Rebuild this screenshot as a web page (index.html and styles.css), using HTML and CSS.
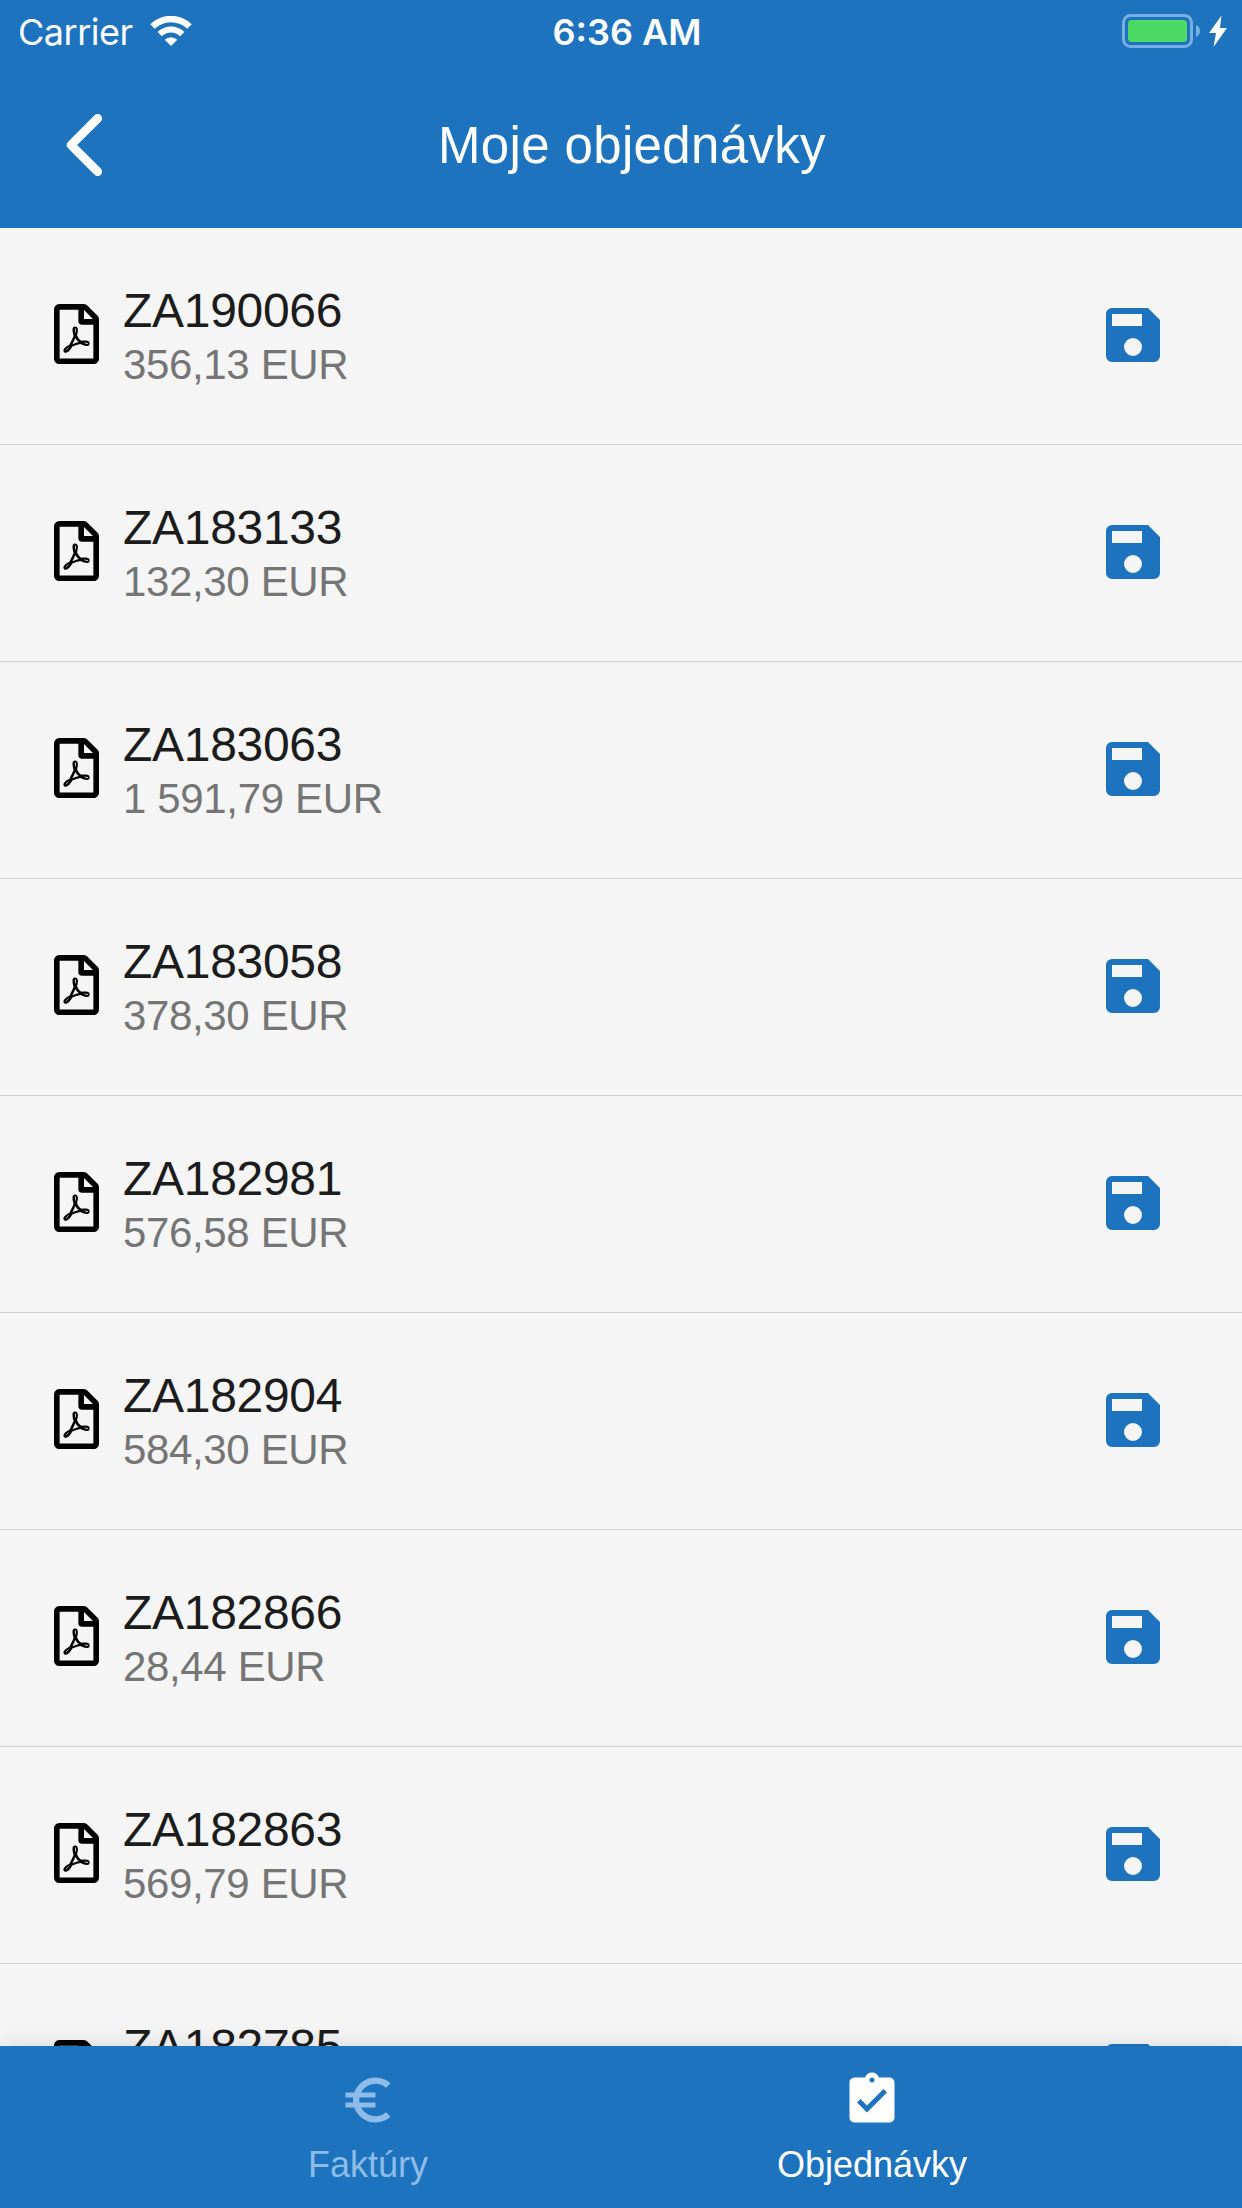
FILE: index.html
```html
<!DOCTYPE html>
<html lang="sk">
<head>
    <meta charset="UTF-8">
    <meta name="viewport" content="width=device-width, initial-scale=1.0">
    <title>Moje objednávky</title>
    <link rel="stylesheet" href="styles.css">
</head>
<body>
    <!-- Shared icons -->
    <svg class="sprite" width="0" height="0">
        <symbol id="pdf" viewBox="0 0 384 512">
            <path d="M369.9 97.9L286 14C277 5 264.8-.1 252.1-.1H48C21.5 0 0 21.5 0 48v416c0 26.5 21.5 48 48 48h288c26.5 0 48-21.5 48-48V131.900c0-12.700-5.100-25-14.100-34zM332.100 128H256V51.900l76.100 76.100zM48 464V48h160v104c0 13.300 10.700 24 24 24h104v288H48zm250.200-143.700c-12.200-12-47-8.700-64.400-6.500-17.200-10.500-28.700-25-36.800-46.300 3.900-16.100 10.100-40.600 5.400-56-4.200-26.200-37.800-23.600-42.600-5.900-4.400 16.100-.4 38.500 7 67.100-10 23.900-24.900 56-35.400 74.400-20 10.300-47 26.200-51 46.200-3.300 15.800 26 55.200 76.100-31.200 22.400-7.400 46.800-16.500 68.400-20.100 18.900 10.200 41 17 55.800 17 25.500 0 28-28.200 17.500-38.700zm-198.100 77.800c5.100-13.700 24.500-29.500 30.400-35-19 30.300-30.400 35.700-30.400 35zm81.600-190.600c7.400 0 6.700 32.100 1.800 40.800-4.400-13.900-4.300-40.800-1.800-40.800zm-24.400 136.600c9.700-16.900 18-37 24.700-54.700 8.300 15.100 18.900 27.200 30.100 35.500-20.800 4.300-38.900 13.100-54.800 19.200zm131.600-5s-5 6-37.300-7.800c35.100-2.600 40.900 5.400 37.300 7.800z"/>
        </symbol>
        <symbol id="save" viewBox="0 0 24 24">
            <path d="M17 3H5a2 2 0 0 0-2 2v14a2 2 0 0 0 2 2h14a2 2 0 0 0 2-2V7l-4-4zm-5 16a3 3 0 1 1 0-6 3 3 0 0 1 0 6zm3-10H5V5h10v4z"/>
        </symbol>
    </svg>

    <header class="header">
        <div class="status-bar">
            <div class="status-left">
                <span class="carrier">Carrier</span>
                <svg class="wifi" width="42" height="31" viewBox="0 0 42 31">
                    <path d="M2.500 10.500a26.500 26.500 0 0 1 37 0" fill="none" stroke="#fff" stroke-width="6.400"/>
                    <path d="M9.700 18.200a16 16 0 0 1 22.600 0" fill="none" stroke="#fff" stroke-width="6"/>
                    <path d="M14.700 23.700a9 9 0 0 1 12.600 0L21 30z" fill="#fff"/>
                </svg>
            </div>
            <span class="time">6:36 AM</span>
            <div class="status-right">
                <svg width="106" height="34" viewBox="0 0 106 34">
                    <rect x="1.5" y="1.5" width="68" height="31" rx="7" fill="none" stroke="#78afe2" stroke-width="3"/>
                    <rect x="6" y="6" width="59" height="22" rx="3.5" fill="#4cd964"/>
                    <path d="M74 11c2.600 1 4 3.200 4 6s-1.400 5-4 6z" fill="#78afe2"/>
                    <path d="M99.500 1.500L87 19h7l-2.500 14L105 14h-7z" fill="#fff"/>
                </svg>
            </div>
        </div>
        <div class="nav-bar">
            <a class="back" href="#">
                <svg width="40" height="66" viewBox="0 0 40 66">
                    <path d="M33.700 6.300L7 33l26.700 26.700" fill="none" stroke="#fff" stroke-width="8.800" stroke-linecap="round" stroke-linejoin="round"/>
                </svg>
            </a>
            <h1>Moje objednávky</h1>
        </div>
    </header>

    <ul class="orders">
        <li class="order">
            <svg class="pdf"><use href="#pdf"/></svg>
            <div class="info"><div class="number">ZA190066</div><div class="price">356,13 EUR</div></div>
            <svg class="save"><use href="#save"/></svg>
        </li>
        <li class="order">
            <svg class="pdf"><use href="#pdf"/></svg>
            <div class="info"><div class="number">ZA183133</div><div class="price">132,30 EUR</div></div>
            <svg class="save"><use href="#save"/></svg>
        </li>
        <li class="order">
            <svg class="pdf"><use href="#pdf"/></svg>
            <div class="info"><div class="number">ZA183063</div><div class="price">1 591,79 EUR</div></div>
            <svg class="save"><use href="#save"/></svg>
        </li>
        <li class="order">
            <svg class="pdf"><use href="#pdf"/></svg>
            <div class="info"><div class="number">ZA183058</div><div class="price">378,30 EUR</div></div>
            <svg class="save"><use href="#save"/></svg>
        </li>
        <li class="order">
            <svg class="pdf"><use href="#pdf"/></svg>
            <div class="info"><div class="number">ZA182981</div><div class="price">576,58 EUR</div></div>
            <svg class="save"><use href="#save"/></svg>
        </li>
        <li class="order">
            <svg class="pdf"><use href="#pdf"/></svg>
            <div class="info"><div class="number">ZA182904</div><div class="price">584,30 EUR</div></div>
            <svg class="save"><use href="#save"/></svg>
        </li>
        <li class="order">
            <svg class="pdf"><use href="#pdf"/></svg>
            <div class="info"><div class="number">ZA182866</div><div class="price">28,44 EUR</div></div>
            <svg class="save"><use href="#save"/></svg>
        </li>
        <li class="order">
            <svg class="pdf"><use href="#pdf"/></svg>
            <div class="info"><div class="number">ZA182863</div><div class="price">569,79 EUR</div></div>
            <svg class="save"><use href="#save"/></svg>
        </li>
        <li class="order">
            <svg class="pdf"><use href="#pdf"/></svg>
            <div class="info"><div class="number">ZA182785</div></div>
            <svg class="save"><use href="#save"/></svg>
        </li>
    </ul>

    <nav class="tabs">
        <a class="tab" href="#">
            <svg viewBox="0 0 24 24">
                <path d="M15 18.500c-2.510 0-4.680-1.420-5.760-3.500H15v-2H8.580c-.05-.33-.08-.66-.08-1s.03-.67.08-1H15V9H9.240C10.320 6.920 12.500 5.500 15 5.500c1.610 0 3.090.59 4.230 1.570L21 5.300C19.410 3.870 17.300 3 15 3c-3.920 0-7.240 2.510-8.480 6H3v2h3.060c-.04.33-.06.66-.06 1s.02.67.06 1H3v2h3.520c1.240 3.490 4.560 6 8.480 6 2.310 0 4.410-.87 6-2.300l-1.780-1.770c-1.130.98-2.600 1.570-4.220 1.570z"/>
            </svg>
            <span>Faktúry</span>
        </a>
        <a class="tab active" href="#">
            <svg viewBox="0 0 24 24">
                <path d="M19 3h-4.180C14.400 1.840 13.300 1 12 1c-1.300 0-2.400.84-2.820 2H5c-1.100 0-2 .9-2 2v14c0 1.100.9 2 2 2h14c1.100 0 2-.9 2-2V5c0-1.100-.9-2-2-2zm-7 0c.55 0 1 .45 1 1s-.45 1-1 1-1-.45-1-1 .45-1 1-1zm-2 14l-4-4 1.410-1.410L10 14.170l6.590-6.590L18 9l-8 8z"/>
            </svg>
            <span>Objednávky</span>
        </a>
    </nav>
</body>
</html>
```

FILE: styles.css
```css
* {
    box-sizing: border-box;
}

body {
    margin: 0;
    height: 2208px;
    display: flex;
    flex-direction: column;
    overflow: hidden;
    background-color: #f5f5f5;
    font-family: "Liberation Sans", Arial, sans-serif;
}

svg {
    display: block;
    flex-shrink: 0;
}

.sprite {
    position: absolute;
}

/* Header */
.header {
    height: 228px;
    flex-shrink: 0;
    background-color: #1e73be;
    color: #fff;
}

.status-bar {
    height: 60px;
    display: grid;
    grid-template-columns: 1fr auto 1fr;
    align-items: center;
    padding: 0 14px 0 18px;
    font-family: Inter, sans-serif;
    font-size: 36px;
}

.status-left {
    display: flex;
    align-items: center;
    gap: 17px;
}

.carrier {
    line-height: 60px;
    padding-top: 2px;
    letter-spacing: -0.5px;
}

.time {
    font-weight: 600;
    line-height: 60px;
    padding-top: 2px;
    padding-left: 8px;
}

.status-right {
    display: flex;
    justify-content: flex-end;
}

.nav-bar {
    height: 168px;
    display: grid;
    grid-template-columns: 104px 1fr 82px;
    align-items: center;
    padding-top: 1px;
}

.back {
    padding-left: 64px;
}

h1 {
    margin: 0;
    padding-top: 2px;
    font-size: 51px;
    font-weight: normal;
    text-align: center;
    line-height: 60px;
    letter-spacing: 0.35px;
}

/* Orders list */
.orders {
    flex: 1;
    min-height: 0;
    overflow: hidden;
    margin: 0;
    padding: 0;
    list-style: none;
}

.order {
    height: 217px;
    display: flex;
    align-items: flex-start;
    padding: 0 73px 0 54px;
    border-bottom: 1px solid #d2d2d2;
}

.pdf {
    width: 45px;
    height: 60px;
    margin-top: 76px;
    fill: #000;
}

.info {
    flex: 1;
    margin-left: 24px;
    padding-top: 56px;
}

.number {
    font-size: 48px;
    line-height: 54px;
    letter-spacing: -0.3px;
    color: #1c1c1c;
}

.price {
    font-size: 42px;
    line-height: 54px;
    letter-spacing: -0.35px;
    color: #757575;
}

.save {
    width: 72px;
    height: 72px;
    margin-top: 71px;
    fill: #1e73be;
}

/* Bottom tabs */
.tabs {
    position: relative;
    height: 162px;
    flex-shrink: 0;
    display: flex;
    padding: 0 118px 0 116px;
    background-color: #1e73be;
    box-shadow: 0 0 24px rgba(0, 0, 0, 0.12);
}

.tab {
    flex: 1;
    display: flex;
    flex-direction: column;
    align-items: center;
    padding-top: 24px;
    color: #8ebce8;
    font-size: 36px;
    line-height: 40px;
    text-decoration: none;
}

.tab svg {
    width: 60px;
    height: 60px;
    margin-bottom: 15px;
    fill: currentColor;
}

.tab.active {
    color: #fff;
}
```
